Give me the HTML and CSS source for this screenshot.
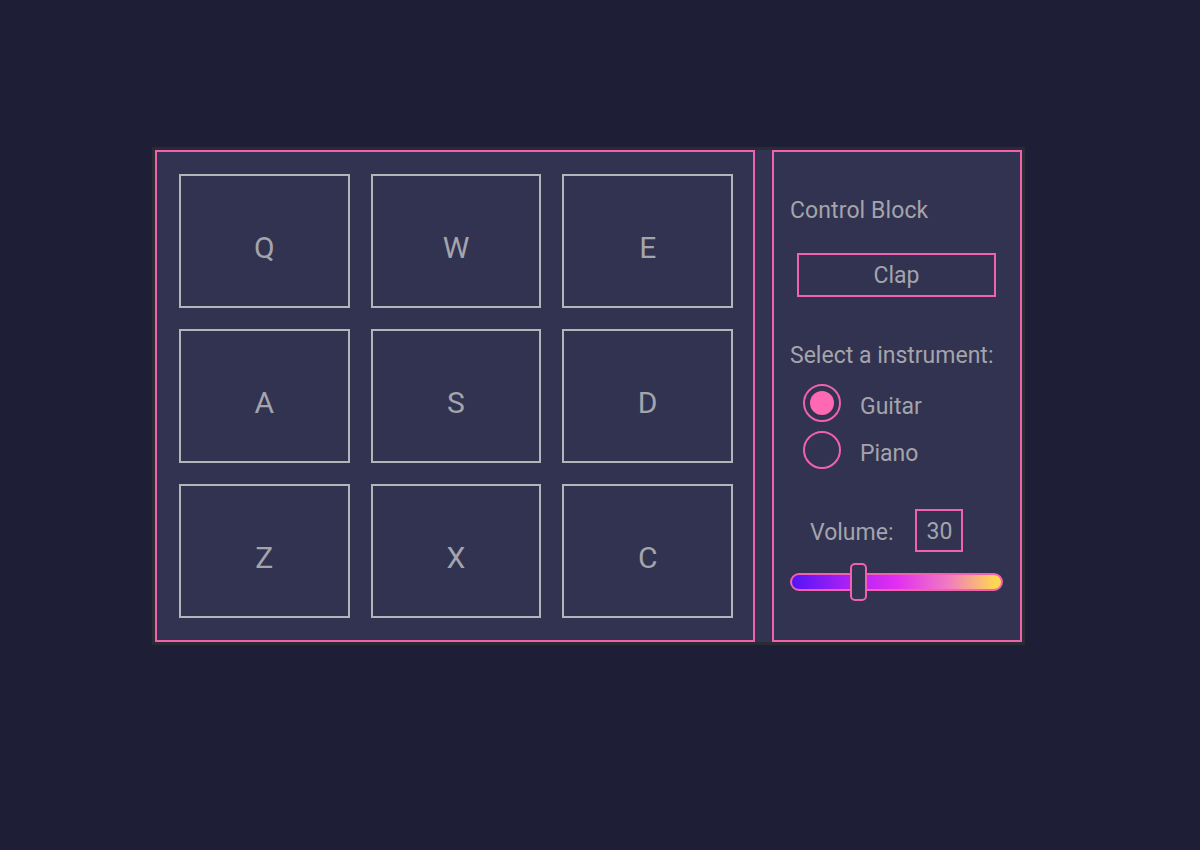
FILE: index.html
```html
<!DOCTYPE html>
<html>
<head>
<meta charset="utf-8">
<link rel="stylesheet" href="styles.css">
</head>
<body>
<div class="machine">
  <div class="pads">
    <div class="pad">Q</div>
    <div class="pad">W</div>
    <div class="pad">E</div>
    <div class="pad">A</div>
    <div class="pad">S</div>
    <div class="pad">D</div>
    <div class="pad">Z</div>
    <div class="pad">X</div>
    <div class="pad">C</div>
  </div>
  <div class="controls">
    <div class="title">Control Block</div>
    <div class="display">Clap</div>
    <div class="label">Select a instrument:</div>
    <div class="options">
      <div class="option"><span class="radio checked"></span><span>Guitar</span></div>
      <div class="option"><span class="radio"></span><span>Piano</span></div>
    </div>
    <div class="volume">
      <span>Volume:</span>
      <span class="vol-box">30</span>
    </div>
    <div class="slider">
      <div class="track"></div>
      <div class="thumb"></div>
    </div>
  </div>
</div>
</body>
</html>
```
FILE: styles.css
```css
* { box-sizing: border-box; }
html, body {
  margin: 0;
  height: 100%;
  background: #1f1e37;
}
body {
  font-family: Roboto, "Liberation Sans", sans-serif;
  color: #a4a4ac;
}
.machine {
  margin: 147px 0 0 152px;
  width: 873px;
  height: 498px;
  border: 3px solid #2b2b33;
  background: #313351;
  display: flex;
  gap: 17px;
}
.pads {
  width: 600px;
  height: 100%;
  border: 2px solid #f062ad;
  display: grid;
  grid-template-columns: repeat(3, 1fr);
  grid-template-rows: repeat(3, 1fr);
  gap: 21px;
  padding: 22px 20px 22px 22px;
}
.pad {
  border: 2px solid #b4b4bb;
  display: flex;
  align-items: center;
  justify-content: center;
  font-size: 30px;
  padding-top: 12px;
}
.controls {
  width: 250px;
  height: 100%;
  border: 2px solid #f062ad;
  padding: 46px 0 0 16px;
  font-size: 23px;
}
.title {
  line-height: 26px;
  letter-spacing: 0.1px;
}
.display {
  margin: 29px 0 0 7px;
  width: 199px;
  height: 44px;
  border: 2px solid #f062ad;
  display: flex;
  align-items: center;
  justify-content: center;
}
.label {
  margin-top: 46px;
  line-height: 26px;
}
.options {
  margin: 15px 0 0 13px;
  display: flex;
  flex-direction: column;
  gap: 9px;
}
.option {
  display: flex;
  align-items: center;
  gap: 19px;
}
.option span:last-child { padding-top: 6px; }
.radio {
  width: 38px;
  height: 38px;
  border: 2px solid #f062ad;
  border-radius: 50%;
  display: flex;
  align-items: center;
  justify-content: center;
}
.radio.checked::after {
  content: "";
  width: 24px;
  height: 24px;
  border-radius: 50%;
  background: #ff69b4;
}
.volume {
  margin: 40px 0 0 20px;
  display: flex;
  align-items: center;
  gap: 22px;
}
.volume > span:first-child { padding-top: 4px; }
.vol-box {
  width: 48px;
  height: 43px;
  border: 2px solid #f062ad;
  display: flex;
  align-items: center;
  justify-content: center;
  padding-top: 2px;
}
.slider {
  position: relative;
  margin-top: 11px;
  width: 213px;
  height: 38px;
  display: flex;
  align-items: center;
}
.track {
  width: 100%;
  height: 18px;
  border: 2px solid #f062ad;
  border-radius: 9px;
  background: linear-gradient(90deg, #5414f5 0%, #a520f5 25%, #e22ef2 50%, #f07cc0 75%, #ffd654 97%);
}
.thumb {
  position: absolute;
  left: 60px;
  top: 0;
  width: 17px;
  height: 38px;
  border: 2px solid #f062ad;
  border-radius: 5px;
  background: #313351;
}
```
